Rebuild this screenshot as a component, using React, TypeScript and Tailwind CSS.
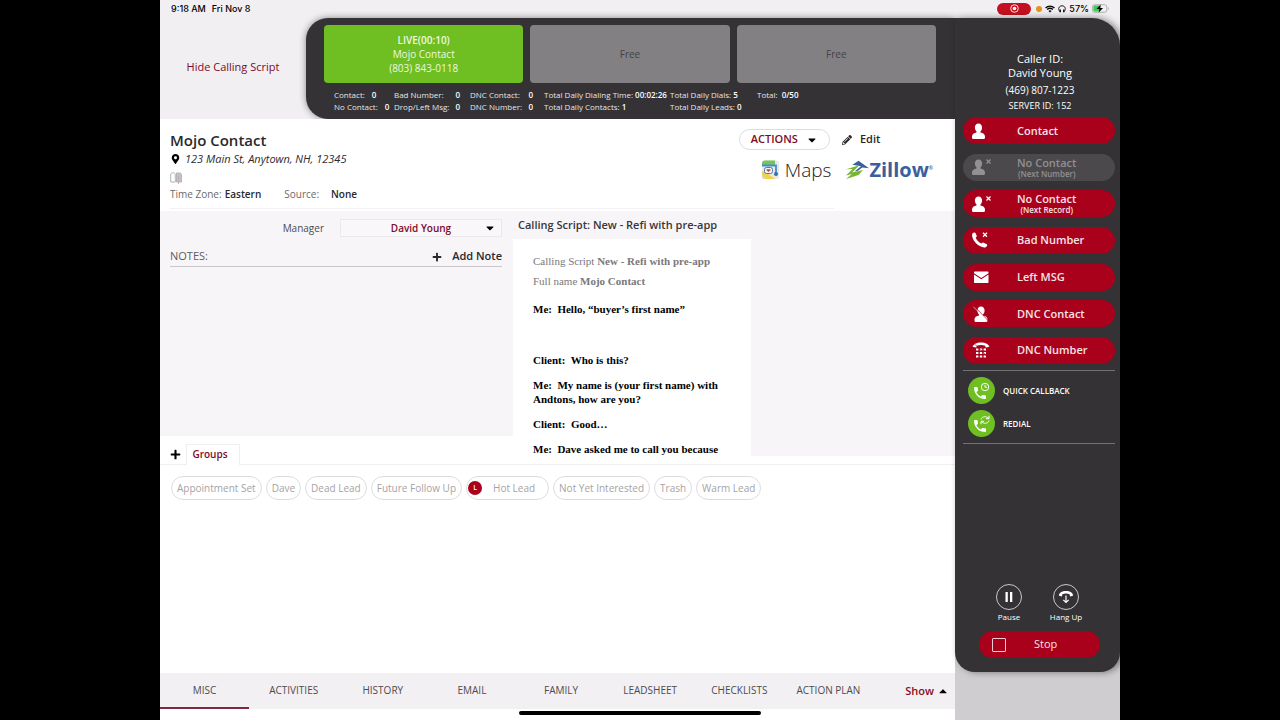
import { useState, type ReactNode } from "react";
import { FaCaretDown, FaCaretUp, FaMapMarkerAlt, FaPencilAlt, FaPlus } from "react-icons/fa";
import { MdPhone } from "react-icons/md";

interface Stat {
  label: string;
  value: string;
}

const statColumns: { className: string; rowClassName: string; stats: Stat[] }[] = [
  { className: "w-[60px]", rowClassName: "gap-[7px]", stats: [{ label: "Contact:", value: "0" }, { label: "No Contact:", value: "0" }] },
  { className: "w-[76px] pr-[10px]", rowClassName: "justify-between", stats: [{ label: "Bad Number:", value: "0" }, { label: "Drop/Left Msg:", value: "0" }] },
  { className: "w-[74px] pr-[11px]", rowClassName: "justify-between", stats: [{ label: "DNC Contact:", value: "0" }, { label: "DNC Number:", value: "0" }] },
  { className: "w-[126px]", rowClassName: "gap-[2px]", stats: [{ label: "Total Daily Dialing Time:", value: "00:02:26" }, { label: "Total Daily Contacts:", value: "1" }] },
  { className: "w-[87px]", rowClassName: "gap-[2px]", stats: [{ label: "Total Daily Dials:", value: "5" }, { label: "Total Daily Leads:", value: "0" }] },
  { className: "", rowClassName: "gap-1", stats: [{ label: "Total:", value: "0/50" }] },
];

const groups = ["Appointment Set", "Dave", "Dead Lead", "Future Follow Up", "Hot Lead", "Not Yet Interested", "Trash", "Warm Lead"];

const tabs = ["MISC", "ACTIVITIES", "HISTORY", "EMAIL", "FAMILY", "LEADSHEET", "CHECKLISTS", "ACTION PLAN"];

function UserShape() {
  return (
    <path d="M6.500 0.500c2.300 0 3.600 1.700 3.600 4.100 0 1.700-.7 3.200-1.600 4v1c2.500.5 4.500 1.500 4.500 4v1.200c0 .7-.4 1.200-1.100 1.200H1.100C.4 16 0 15.500 0 14.800v-1.200c0-2.500 2-3.500 4.500-4v-1c-.9-.8-1.600-2.300-1.600-4C2.900 2.200 4.200.5 6.500.5z" fill="currentColor" />
  );
}

function UserIcon() {
  return (
    <svg viewBox="0 0 20 16" className="w-5 h-4">
      <UserShape />
    </svg>
  );
}

function UserXIcon() {
  return (
    <svg viewBox="0 0 20 16" className="w-5 h-4">
      <UserShape />
      <path d="M14.500 0.500l4 4m0-4l-4 4" stroke="currentColor" strokeWidth="1.200" />
    </svg>
  );
}

function PhoneXIcon() {
  return (
    <svg viewBox="0 0 20 16" className="w-5 h-4">
      <path d="M.6 1.300C1.500.3 3 .1 3.500 1l1.200 2.800c.3.700-.2 1.200-1 1.700.9 2.700 2.900 4.900 5.900 6 .7-.9 1.300-1.100 2-.8l3.200 1.600c.8.500.4 1.700-.8 2.600-1 .7-2.300.6-3.800.1C5.600 13.400 1.600 9.600.4 5.200 0 3.700 0 2.200.6 1.300z" fill="currentColor" />
      <path d="M11 0.800l4 4m0-4l-4 4" stroke="currentColor" strokeWidth="1.300" />
    </svg>
  );
}

function MailIcon() {
  return (
    <svg viewBox="0 0 20 16" className="w-5 h-4">
      <path d="M3 2.500h12.500c.6 0 1 .4 1 1v.7L9.300 9 2 4.200v-.7c0-.6.4-1 1-1z" fill="currentColor" />
      <path d="M2 5.600l7.300 4.700 7.200-4.700V13c0 .6-.4 1-1 1H3c-.6 0-1-.4-1-1z" fill="currentColor" />
    </svg>
  );
}

function DncUserIcon() {
  return (
    <svg viewBox="0 0 20 16" className="w-5 h-4">
      <g transform="translate(2.500 0)">
        <UserShape />
      </g>
      <path d="M2.500 0.500L16.500 15" stroke="#a9001c" strokeWidth="0.700" />
      <path d="M1.500 0.800L6 5.500" stroke="currentColor" strokeWidth="0.600" />
    </svg>
  );
}

function DncPhoneIcon() {
  return (
    <svg viewBox="0 0 20 16" className="w-5 h-4">
      <path d="M.6 4.800C1 2.300 4.500.4 9 .4s8 1.900 8.400 4.400l-3.200.8c-.7-.2-.9-1-.9-1.900-2.700-1-5.900-1-8.600 0 0 .9-.2 1.700-.9 1.900z" fill="currentColor" />
      <path d="M4 7.600h10M4 11h10M4 14.400h10" stroke="currentColor" strokeWidth="2" strokeDasharray="2.400 1.400" />
      <path d="M2 1.500L16.500 15.500" stroke="#a9001c" strokeWidth="0.600" />
    </svg>
  );
}

function CallbackIcon({ redial = false }: { redial?: boolean }) {
  return (
    <span className="relative flex items-center justify-center w-[27px] h-[27px] rounded-full bg-[#6fbe22] text-white">
      <MdPhone className="w-4 h-4 mt-1 mr-1" />
      <svg viewBox="0 0 10 10" className="absolute right-[5px] top-[5px] w-[10px] h-[10px]" fill="none" stroke="currentColor" strokeWidth="1">
        {redial ? (
          <path d="M1 4.500C1.500 2 5 .8 7.500 2.500L9 3.500M9 .8v2.900H6M9 5.500C8.500 8 5 9.200 2.500 7.500L1 6.500M1 9.200V6.300h3" />
        ) : (
          <>
            <circle cx="5" cy="5" r="3.700" />
            <path d="M5 2.800V5.200h2" />
          </>
        )}
      </svg>
    </span>
  );
}

function HangUpIcon() {
  return (
    <svg viewBox="0 0 16 14" className="w-4 h-[14px]">
      <path d="M.8 5.600C1 3 3.800 1 8 1s7 2 7.200 4.600l-2.700.8c-.6-.2-.8-1.200-.8-2.200-2.300-.9-5.100-.9-7.400 0 0 1-.2 2-.8 2.200z" fill="currentColor" />
      <path d="M8 5.500v7M5.300 9.800L8 12.500l2.700-2.700" fill="none" stroke="currentColor" strokeWidth="1.200" />
    </svg>
  );
}

function MapsLogo() {
  return (
    <svg viewBox="0 0 20 20" className="w-5 h-5">
      <rect x="1" y="0.500" width="17" height="18.500" rx="3" fill="#ece8df" />
      <path d="M1 5V3.500A3 3 0 0 1 4 .5h10V5z" fill="#77c35c" />
      <path d="M1 11l5 2 8 6H4a3 3 0 0 1-3-3z" fill="#f1d34b" />
      <path d="M1 14l4 5H4a3 3 0 0 1-3-3z" fill="#d9d4c9" />
      <path d="M1 5.500h14v7.500" fill="none" stroke="#3f8fd8" strokeWidth="1.800" />
      <circle cx="15" cy="14" r="2" fill="#2e6fb5" />
      <rect x="3.500" y="7.500" width="8" height="6" rx="2" fill="#f7f5f0" stroke="#4a78ad" strokeWidth="1" />
      <path d="M5.500 9.200h4v1l-2 1.800-2-1.800z" fill="#c0405a" />
    </svg>
  );
}

function ZillowMark() {
  return (
    <svg viewBox="0 0 24 20" className="w-6 h-5">
      <path d="M7.500 4.800L13.500.8 24 8.200l-6.800-.6-4.200 3.200-3.500.6L16 6.200z" fill="#3b5f9e" />
      <path d="M1 9.200L14.500 5.200 7 12.500 18 10l-4.500 5L1 19l6-5-6 1.500L7.500 9z" fill="#77b82b" />
    </svg>
  );
}

interface ResultButtonProps {
  icon: ReactNode;
  label: string;
  note?: string;
  disabled?: boolean;
}

function ResultButton({ icon, label, note, disabled }: ResultButtonProps) {
  return (
    <button
      type="button"
      disabled={disabled}
      className="flex items-center w-full h-[27px] pl-[9px] rounded-full bg-[#a9001c] text-[#f6e3e6] disabled:bg-[#4b494c] disabled:text-[#929093]"
    >
      <span className={`w-[45px] shrink-0 ${disabled ? "" : "text-white"}`}>{icon}</span>
      <span className="flex flex-col items-center text-[11px] font-semibold leading-3 whitespace-nowrap">
        {label}
        {note && <span className="text-[8px] leading-[9px]">{note}</span>}
      </span>
    </button>
  );
}

function StatusBar() {
  return (
    <div className="flex items-center justify-between h-[18px] pb-px pl-[11px] pr-[10px] font-['Inter',sans-serif] text-[9px] font-medium text-black">
      <div className="flex gap-[6px]">
        <span>9:18 AM</span>
        <span>Fri Nov 8</span>
      </div>
      <div className="flex items-center gap-[3px]">
        <span className="flex items-center justify-center w-[34px] h-3 mr-[2px] rounded-full bg-[#c5111f]">
          <svg viewBox="0 0 10 10" className="w-[9px] h-[9px]">
            <circle cx="5" cy="5" r="4.200" fill="none" stroke="#fff" strokeWidth="1" />
            <circle cx="5" cy="5" r="2" fill="#fff" />
          </svg>
        </span>
        <span className="w-[6px] h-[6px] rounded-full bg-[#e8921c]" />
        <svg viewBox="0 0 12 9" className="w-[10px] h-2" fill="none" stroke="#000" strokeWidth="1.600">
          <path d="M.7 3.200c3-2.900 7.600-2.900 10.600 0M2.600 5.200c2-1.800 4.800-1.800 6.800 0" />
          <path d="M4.200 6.800c1-.9 2.600-.9 3.600 0L6 8.800z" fill="#000" stroke="none" />
        </svg>
        <svg viewBox="0 0 10 10" className="w-2 h-2" fill="none" stroke="#000" strokeWidth="1.100">
          <path d="M2.500 8.500C-.5 5 1 1 5 1s5.500 4 2.500 7.500" />
          <path d="M2.800 5.500v3.700M7.200 5.500v3.700" strokeWidth="1.600" />
        </svg>
        <span>57%</span>
        <svg viewBox="0 0 20 10" className="w-[18px] h-[9px]">
          <rect x="0.500" y="0.800" width="16" height="8.400" rx="2.500" fill="none" stroke="#a9a8ab" />
          <rect x="1.500" y="1.800" width="8" height="6.400" rx="1.500" fill="#42c85b" />
          <path d="M18 3.500v3c1.200-.5 1.200-2.500 0-3z" fill="#a9a8ab" />
          <path d="M9.800 0.500L5 5.600h3.200L7.400 9.500 12.300 4.400H9z" fill="#000" />
        </svg>
      </div>
    </div>
  );
}

function CallHeader() {
  return (
    <header className="flex h-[101px]">
      <div className="flex items-center justify-center w-[146px] pb-[3px] shrink-0">
        <button type="button" className="text-[11px] leading-4 text-[#7d0a2a] whitespace-nowrap">Hide Calling Script</button>
      </div>
      <div className="flex-1 min-w-0 pt-[7px] pl-[18px] pr-[19px] rounded-l-[22px] bg-[#343235] shadow-[0_0_7px_rgba(0,0,0,0.45)]">
        <div className="grid grid-cols-3 gap-[7px] h-[58px] text-[10px]">
          <div className="flex flex-col items-center justify-center rounded-sm bg-[#6fbe22] leading-[14px] text-[#eef8e0]">
            <span className="font-semibold">LIVE(00:10)</span>
            <span>Mojo Contact</span>
            <span>(803) 843-0118</span>
          </div>
          <div className="flex items-center justify-center rounded-sm bg-[#828083] text-[#454346]">Free</div>
          <div className="flex items-center justify-center rounded-sm bg-[#828083] text-[#454346]">Free</div>
        </div>
        <div className="flex pt-[6px] pl-[10px] text-[8px] leading-3 text-[#e6e5e7] whitespace-nowrap">
          {statColumns.map((col, i) => (
            <dl key={i} className={col.className}>
              {col.stats.map((s) => (
                <div key={s.label} className={`flex ${col.rowClassName}`}>
                  <dt>{s.label}</dt>
                  <dd className="font-semibold text-white">{s.value}</dd>
                </div>
              ))}
            </dl>
          ))}
        </div>
      </div>
    </header>
  );
}

function ContactInfo() {
  return (
    <section className="h-[92px] pl-[10px] pr-[22px] bg-white">
      <div className="flex justify-between h-[89px]">
        <div className="pt-[11px] whitespace-nowrap">
          <h1 className="text-[15px] leading-5 font-semibold text-[#2a282b]">Mojo Contact</h1>
          <p className="flex items-center gap-[5px] h-[18px] pl-px text-[11px] italic text-[#2d2b2e]">
            <FaMapMarkerAlt className="w-[9px] h-[10px] text-black" />
            123 Main St, Anytown, NH, 12345
          </p>
          <svg viewBox="0 0 12 12" className="w-3 h-3 mt-1" fill="none" stroke="#b5b3b6" strokeWidth="1">
            <path d="M.7 10V3c0-1.500 1-2.300 2.300-2.300S5.300 1.500 5.300 3v7z" />
            <path d="M6.500 1h3c1.300 0 2 1 2 2v7h-5z" fill="#c4c2c5" />
            <path d="M8.500 4v8" />
          </svg>
          <dl className="flex mt-[3px] text-[10px] leading-[14px]">
            <dt className="text-[#6b696c]">Time Zone:</dt>
            <dd className="ml-[3px] font-semibold text-[#2a282b]">Eastern</dd>
            <dt className="ml-[23px] text-[#6b696c]">Source:</dt>
            <dd className="ml-3 font-semibold text-[#2a282b]">None</dd>
          </dl>
        </div>
        <div className="flex flex-col gap-[9px] pt-[10px]">
          <div className="flex items-center gap-3">
            <button type="button" className="flex items-center gap-2 h-[21px] px-[11px] border border-[#dddbde] rounded-full text-[11px] font-semibold text-[#7d0a2a]">
              ACTIONS <FaCaretDown className="w-3 h-3 text-black" />
            </button>
            <button type="button" className="flex items-center gap-2 text-[11px] font-semibold text-[#2a282b]">
              <FaPencilAlt className="w-[10px] h-[10px]" /> Edit
            </button>
          </div>
          <div className="flex items-center gap-[14px] pl-[22px] h-[22px]">
            <a href="#maps" className="flex items-center gap-1 text-[19px] font-light text-[#1c1a1d]">
              <MapsLogo /> Maps
            </a>
            <a href="#zillow" className="flex items-center text-xl font-bold text-[#3b5f9e]">
              <ZillowMark /> Zillow<sup className="text-[5px]">®</sup>
            </a>
          </div>
        </div>
      </div>
      <hr className="w-[87%] border-[#f3f1f4]" />
    </section>
  );
}

function CallingScript() {
  return (
    <article className="flex-1 min-h-0 overflow-hidden bg-white pt-[15px] px-5 font-['Liberation_Serif',serif] text-[11px] leading-[14px] text-black">
      <p className="text-[#7a787b]">Calling Script <b>New - Refi with pre-app</b></p>
      <p className="mt-[6px] text-[#7a787b]">Full name <b>Mojo Contact</b></p>
      <div className="flex flex-col gap-[11px] mt-[14px] font-bold whitespace-pre-wrap">
        <p>Me:  Hello, “buyer’s first name”</p>
        <p className="mt-[26px]">Client:  Who is this?</p>
        <p>Me:  My name is (your first name) with Andtons, how are you?</p>
        <p>Client:  Good…</p>
        <p>Me:  Dave asked me to call you because</p>
      </div>
    </article>
  );
}

function Workspace() {
  return (
    <section className="flex h-[254px] border-b border-[#f0eef1] bg-white">
      <div className="flex flex-col w-[353px] shrink-0">
        <div className="flex-1 pt-2 pl-[10px] pr-[11px] bg-[#f7f5f8]">
          <div className="flex items-center justify-end gap-4 text-[10px]">
            <label htmlFor="manager" className="text-[#4d4b4e]">Manager</label>
            <div className="relative w-[162px]">
              <select
                id="manager"
                className="w-full h-[18px] appearance-none border border-[#eae8eb] bg-[#f9f7fa] text-center [text-align-last:center] font-semibold text-[#7d0a2a]"
              >
                <option>David Young</option>
              </select>
              <FaCaretDown className="absolute right-[6px] top-[3px] w-3 h-3 text-black pointer-events-none" />
            </div>
          </div>
          <div className="flex items-center justify-between h-5 mt-[10px] border-b border-[#c9c7ca]">
            <h2 className="text-[11px] text-[#5d5b5e]">NOTES:</h2>
            <button type="button" className="flex items-center gap-[10px] text-[11px] font-semibold text-[#2a282b]">
              <FaPlus className="w-[10px] h-[10px]" /> Add Note
            </button>
          </div>
        </div>
        <div className="flex items-end h-[29px] pl-[10px] -mb-px">
          <button type="button" aria-label="Add group" className="flex items-center w-4 h-[21px]">
            <FaPlus className="w-[11px] h-[11px]" />
          </button>
          <button type="button" className="h-[21px] w-[54px] pb-px pr-[6px] border border-b-0 border-[#f0eef1] bg-white text-[10px] font-semibold text-[#7d0a2a]">
            Groups
          </button>
        </div>
      </div>
      <div className="flex flex-col w-[238px] shrink-0">
        <h2 className="h-7 pl-[5px] bg-[#f7f5f8] text-[11px] leading-7 font-semibold text-[#38363a] whitespace-nowrap">
          Calling Script: New - Refi with pre-app
        </h2>
        <CallingScript />
      </div>
      <div className="flex-1 mb-2 bg-[#f7f5f8]" />
    </section>
  );
}

function BottomTabs() {
  const [active, setActive] = useState("MISC");
  return (
    <nav className="flex h-9 bg-[#f2f0f3] text-[10px] whitespace-nowrap">
      {tabs.map((t) => (
        <button
          key={t}
          type="button"
          onClick={() => setActive(t)}
          className={`flex-1 basis-0 border-b-2 text-[#4d4b4e] ${active === t ? "border-[#7d2a42]" : "border-transparent"}`}
        >
          {t}
        </button>
      ))}
      <button type="button" className="flex items-center justify-end gap-[3px] w-[82px] pr-[6px] text-[11px] font-semibold text-[#8d0a24]">
        Show <FaCaretUp className="w-3 h-3 text-black" />
      </button>
    </nav>
  );
}

function DialerSidebar() {
  return (
    <aside className="flex flex-col w-[165px] shrink-0 text-white">
      <div className="relative flex flex-col flex-1 pt-[34px] pl-2 pr-[5px] pb-[14px] rounded-tr-[28px] rounded-b-[20px] bg-[#343235] shadow-[3px_0_7px_rgba(0,0,0,0.45)]">
        <div className="flex flex-col items-center h-[65px] pl-[2px] whitespace-nowrap">
          <span className="text-[11px] leading-[14px]">Caller ID:</span>
          <span className="text-[11px] leading-[14px]">David Young</span>
          <span className="mt-[2px] text-[10px] leading-4">(469) 807-1223</span>
          <span className="text-[9px] leading-4">SERVER ID: 152</span>
        </div>
        <div className="flex flex-col justify-between h-[247px]">
          <ResultButton icon={<UserIcon />} label="Contact" />
          <ResultButton icon={<UserXIcon />} label="No Contact" note="(Next Number)" disabled />
          <ResultButton icon={<UserXIcon />} label="No Contact" note="(Next Record)" />
          <ResultButton icon={<PhoneXIcon />} label="Bad Number" />
          <ResultButton icon={<MailIcon />} label="Left MSG" />
          <ResultButton icon={<DncUserIcon />} label="DNC Contact" />
          <ResultButton icon={<DncPhoneIcon />} label="DNC Number" />
        </div>
        <div className="flex flex-col gap-[6px] mt-[6px] py-[6px] pl-[5px] border-y border-[#727073] text-[8px] font-semibold">
          <button type="button" className="flex items-center gap-2">
            <CallbackIcon /> QUICK CALLBACK
          </button>
          <button type="button" className="flex items-center gap-2">
            <CallbackIcon redial /> REDIAL
          </button>
        </div>
        <div className="flex justify-center gap-[17px] mt-auto pt-6 pr-[3px] text-[8px] leading-3">
          <button type="button" className="flex flex-col items-center gap-[1px] w-10">
            <span className="flex items-center justify-center w-[26px] h-[26px] border border-[#c9c8ca] rounded-full">
              <svg viewBox="0 0 8 10" className="w-2 h-[10px]" fill="currentColor">
                <path d="M0.500 0h2.300v10H.5zM5 0h2.300v10H5z" />
              </svg>
            </span>
            Pause
          </button>
          <button type="button" className="flex flex-col items-center gap-[1px] w-10">
            <span className="flex items-center justify-center w-[26px] h-[26px] border border-[#c9c8ca] rounded-full">
              <HangUpIcon />
            </span>
            Hang Up
          </button>
        </div>
        <button type="button" className="flex items-center h-[27px] mt-2 ml-4 mr-[15px] pl-[13px] gap-7 rounded-full bg-[#a9001c] text-[11px] text-[#f6e3e6]">
          <span className="w-[14px] h-[14px] border border-[#eecdd2] rounded-[1px]" />
          Stop
        </button>
      </div>
      <div className="h-[72px] -mt-6 bg-[#cfcdd0]" />
    </aside>
  );
}

export default function App() {
  return (
    <div className="min-h-screen flex bg-black px-[12.5%] font-['Open_Sans',sans-serif]">
      <div className="flex flex-col flex-1 min-w-0 overflow-hidden bg-[#f1eff2]">
        <StatusBar />
        <div className="flex flex-1">
          <div className="flex flex-col flex-1 min-w-0">
            <CallHeader />
            <main className="relative flex flex-col flex-1 bg-white">
              <ContactInfo />
              <Workspace />
              <ul className="flex flex-wrap gap-1 pt-[11px] pl-[11px] text-[10px] text-[#a5a3a6] whitespace-nowrap">
                {groups.map((g) => (
                  <li key={g}>
                    <button type="button" className="flex items-center h-6 px-[5px] border border-[#dddbde] rounded-full">
                      {g === "Hot Lead" && (
                        <span className="flex items-center justify-center w-[14px] h-[14px] -ml-1 mr-[11px] rounded-full bg-[#a9001c] text-[7px] font-semibold text-white">L</span>
                      )}
                      <span className={g === "Hot Lead" ? "pr-2" : ""}>{g}</span>
                    </button>
                  </li>
                ))}
              </ul>
              <div className="mt-auto">
                <BottomTabs />
                <div className="flex justify-center h-[11px] pt-[2px]">
                  <div className="w-[242px] h-1 ml-[165px] rounded-full bg-black" />
                </div>
              </div>
            </main>
          </div>
          <DialerSidebar />
        </div>
      </div>
    </div>
  );
}
